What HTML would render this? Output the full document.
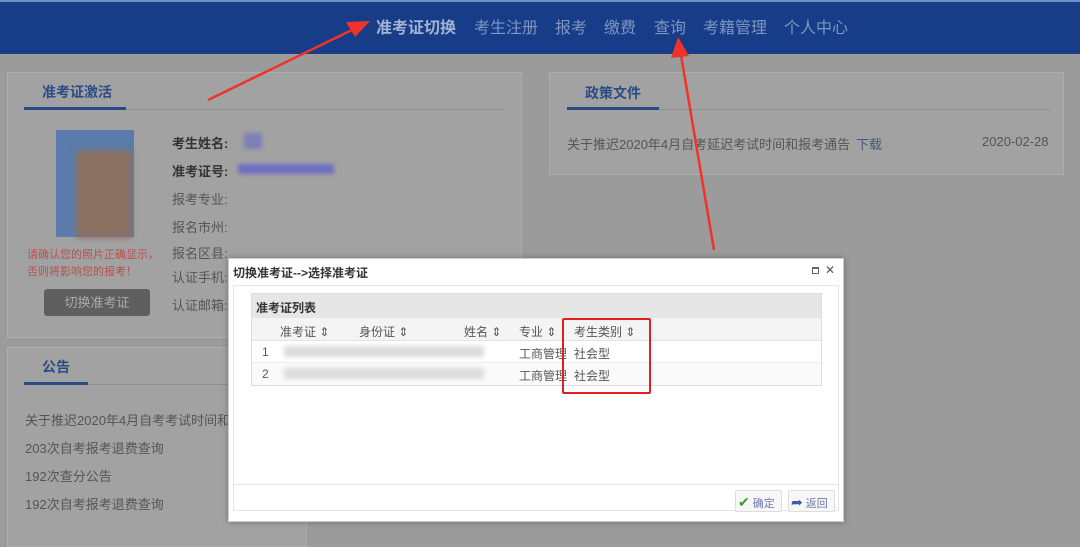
<!DOCTYPE html>
<html><head><meta charset="utf-8"><style>
*{margin:0;padding:0;box-sizing:border-box}
body{width:1080px;height:546px;overflow:hidden;background:#9b9b9b;font-family:"Liberation Sans","Noto Sans CJK SC",sans-serif;position:relative;font-size:12px;color:#444}
.hdr{position:absolute;left:0;top:0;width:1080px;height:54px;background:#173d88;border-top:2px solid #6f8fc9}
.nav{position:absolute;top:14px;font-size:16px;color:#7f95c2}
.panel{position:absolute;background:#a2a2a2;border:1px solid #adadad}
.tab{position:absolute;font-size:14px;font-weight:bold;color:#2c4a86}
.line{position:absolute;height:1px;background:#8f8f8f}
.uline{position:absolute;height:3px;background:#2c4a86}
.g{position:absolute;color:#555;font-size:13px}
.blur{position:absolute;background:#999;filter:blur(2px)}
.modal{position:absolute;left:228px;top:258px;width:616px;height:264px;background:#fff;border:1px solid #ccc;box-shadow:0 0 6px rgba(0,0,0,.3)}
.m{position:absolute;font-size:12px;color:#555}
</style></head><body>
<div class="hdr"></div>
<div class="nav" style="left:376px;color:#a3b3d6;font-weight:bold">准考证切换</div>
<div class="nav" style="left:474px">考生注册</div>
<div class="nav" style="left:555px">报考</div>
<div class="nav" style="left:604px">缴费</div>
<div class="nav" style="left:654px">查询</div>
<div class="nav" style="left:703px">考籍管理</div>
<div class="nav" style="left:784px">个人中心</div>

<div class="panel" style="left:7px;top:72px;width:515px;height:266px"></div>
<div class="tab" style="left:42px;top:82px">准考证激活</div>
<div class="line" style="left:24px;top:109px;width:480px"></div>
<div class="uline" style="left:24px;top:107px;width:102px"></div>
<div style="position:absolute;left:56px;top:130px;width:78px;height:107px;background:#5a7bab"></div>
<div style="position:absolute;left:76px;top:150px;width:56px;height:88px;background:#8a7060;filter:blur(3px)"></div>
<div class="g" style="left:172px;top:133px;font-weight:bold;color:#333">考生姓名:</div>
<div class="blur" style="left:244px;top:133px;width:18px;height:16px;background:#7d7fb6"></div>
<div class="g" style="left:172px;top:161px;font-weight:bold;color:#333">准考证号:</div>
<div class="blur" style="left:238px;top:164px;width:96px;height:10px;background:#6e6ec2"></div>
<div class="g" style="left:172px;top:189px">报考专业:</div>
<div class="g" style="left:172px;top:217px">报名市州:</div>
<div class="g" style="left:172px;top:243px">报名区县:</div>
<div class="g" style="left:172px;top:267px">认证手机:</div>
<div class="g" style="left:172px;top:295px">认证邮箱:</div>
<div style="position:absolute;left:27px;top:247px;color:#b85050;font-size:11px;line-height:17px;width:140px">请确认您的照片正确显示，否则将影响您的报考！</div>
<div style="position:absolute;left:44px;top:289px;width:106px;height:27px;background:#5f5f5f;border-radius:3px;color:#aaa;font-size:13px;text-align:center;line-height:27px">切换准考证</div>

<div class="panel" style="left:549px;top:72px;width:515px;height:103px"></div>
<div class="tab" style="left:585px;top:83px">政策文件</div>
<div class="line" style="left:567px;top:109px;width:483px"></div>
<div class="uline" style="left:567px;top:107px;width:92px"></div>
<div class="g" style="left:567px;top:134px;color:#555">关于推迟2020年4月自考延迟考试时间和报考通告</div>
<div class="g" style="left:856px;top:134px;color:#44577f">下载</div>
<div class="g" style="left:982px;top:134px">2020-02-28</div>

<div class="panel" style="left:7px;top:347px;width:300px;height:200px"></div>
<div class="tab" style="left:42px;top:357px">公告</div>
<div class="line" style="left:24px;top:384px;width:240px"></div>
<div class="uline" style="left:24px;top:382px;width:64px"></div>
<div class="g" style="left:25px;top:410px">关于推迟2020年4月自考考试时间和报</div>
<div class="g" style="left:25px;top:438px">203次自考报考退费查询</div>
<div class="g" style="left:25px;top:466px">192次查分公告</div>
<div class="g" style="left:25px;top:494px">192次自考报考退费查询</div>

<div class="modal">
<div style="position:absolute;left:4px;top:5px;font-size:12px;font-weight:bold;color:#333">切换准考证--&gt;选择准考证</div>
<div style="position:absolute;right:24px;top:8px;width:7px;height:7px;border:1px solid #666;border-top-width:2px"></div>
<div style="position:absolute;right:8px;top:4px;font-size:12px;color:#555">✕</div>
<div style="position:absolute;left:4px;top:26px;width:606px;height:226px;border:1px solid #e6e6e6"></div>
<div style="position:absolute;left:22px;top:34px;width:571px;height:93px;border:1px solid #ddd">
<div style="height:24px;background:#e6e6e6;font-weight:bold;font-size:12px;color:#333;padding:5px 4px">准考证列表</div>
<div style="height:23px;background:#f4f4f4;border-bottom:1px solid #e4e4e4;position:relative">
<div class="m" style="left:28px;top:5px">准考证 ⇕</div><div class="m" style="left:107px;top:5px">身份证 ⇕</div><div class="m" style="left:212px;top:5px">姓名 ⇕</div><div class="m" style="left:267px;top:5px">专业 ⇕</div><div class="m" style="left:322px;top:5px">考生类别 ⇕</div>
</div>
<div style="height:22px;border-bottom:1px solid #eee;position:relative;background:#fff"><div class="m" style="left:10px;top:4px">1</div><div class="blur" style="left:32px;top:5px;width:200px;height:11px;background:#ddd"></div><div class="m" style="left:267px;top:4px">工商管理</div><div class="m" style="left:322px;top:4px">社会型</div></div>
<div style="height:22px;position:relative;background:#fafafa"><div class="m" style="left:10px;top:4px">2</div><div class="blur" style="left:32px;top:5px;width:200px;height:11px;background:#ddd"></div><div class="m" style="left:267px;top:4px">工商管理</div><div class="m" style="left:322px;top:4px">社会型</div></div>
</div>
<div style="position:absolute;left:333px;top:59px;width:89px;height:76px;border:2px solid #e02020;border-radius:2px"></div>
<div style="position:absolute;left:4px;top:225px;width:606px;height:1px;background:#e6e6e6"></div>
<div style="position:absolute;left:506px;top:231px;width:47px;height:22px;border:1px solid #ddd;border-radius:2px;background:#f7f7f7;font-size:11px;color:#6a7bb0;padding:3px 2px"><span style="color:#3a9a2a;font-size:14px">✔</span> 确定</div>
<div style="position:absolute;left:559px;top:231px;width:47px;height:22px;border:1px solid #ddd;border-radius:2px;background:#f7f7f7;font-size:11px;color:#6a7bb0;padding:3px 2px"><span style="color:#2f5fa8;font-size:14px">➦</span> 返回</div>
</div>

<svg style="position:absolute;left:0;top:0" width="1080" height="546">
<line x1="208" y1="100" x2="352" y2="30" stroke="#f0332a" stroke-width="2.5"/>
<polygon points="370,21 346,22 355,37" fill="#f0332a"/>
<line x1="714" y1="250" x2="681" y2="55" stroke="#f0332a" stroke-width="2.5"/>
<polygon points="678,37 671,58 689,56" fill="#f0332a"/>
</svg>
</body></html>
